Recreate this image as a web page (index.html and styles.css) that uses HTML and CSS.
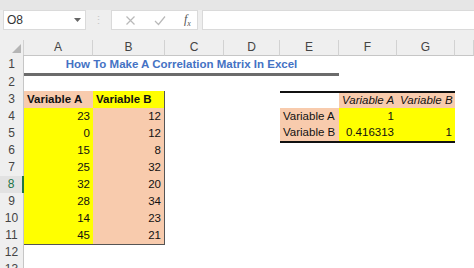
FILE: index.html
```html
<!DOCTYPE html>
<html>
	<head>
		<title>Correlation Matrix | Excel</title>
		<meta charset="UTF-8">
		<link rel="stylesheet" href="styles.css">
	</head>
	<body>
		<div class="ribbon"></div>

		<div class="formula-bar">
			<div class="name-box">
				<span>O8</span>
				<svg class="caret" width="7" height="4" viewBox="0 0 7 4"><polygon points="0,0 7,0 3.5,4" fill="#666"/></svg>
			</div>
			<div class="grip">&#8942;</div>
			<div class="fx-box">
				<svg width="11" height="11" viewBox="0 0 11 11"><path d="M1.5 1.5 L9.5 9.5 M9.5 1.5 L1.5 9.5" stroke="#b9b9b9" stroke-width="1.2" fill="none"/></svg>
				<svg width="12" height="11" viewBox="0 0 12 11"><path d="M1 6 L4.5 9.5 L11 1.5" stroke="#b9b9b9" stroke-width="1.2" fill="none"/></svg>
				<span class="fx">f<sub>x</sub></span>
			</div>
			<div class="formula-input"></div>
		</div>

		<div class="sheet">
			<div class="row head">
				<div class="corner"><svg width="9" height="9" viewBox="0 0 9 9"><polygon points="9,0 9,9 0,9" fill="#b5b5b5"/></svg></div>
				<div class="col">A</div>
				<div class="col">B</div>
				<div class="col">C</div>
				<div class="col">D</div>
				<div class="col">E</div>
				<div class="col">F</div>
				<div class="col">G</div>
				<div class="col"></div>
			</div>

			<div class="row first">
				<div class="num">1</div>
				<div class="title">How To Make A Correlation Matrix In Excel</div>
			</div>

			<div class="row">
				<div class="num">2</div>
			</div>

			<div class="row">
				<div class="num">3</div>
				<div class="cell peach bold">Variable A</div>
				<div class="cell yellow bold edge">Variable B</div>
				<div class="cell"></div>
				<div class="cell"></div>
				<div class="cell top-rule"></div>
				<div class="cell peach italic top-rule">Variable A</div>
				<div class="cell peach italic top-rule right">Variable B</div>
			</div>

			<div class="row">
				<div class="num">4</div>
				<div class="cell yellow right">23</div>
				<div class="cell peach right edge">12</div>
				<div class="cell"></div>
				<div class="cell"></div>
				<div class="cell peach">Variable A</div>
				<div class="cell yellow right">1</div>
				<div class="cell yellow"></div>
			</div>

			<div class="row">
				<div class="num">5</div>
				<div class="cell yellow right">0</div>
				<div class="cell peach right edge">12</div>
				<div class="cell"></div>
				<div class="cell"></div>
				<div class="cell peach bottom-rule">Variable B</div>
				<div class="cell yellow right bottom-rule">0.416313</div>
				<div class="cell yellow right bottom-rule">1</div>
			</div>

			<div class="row">
				<div class="num">6</div>
				<div class="cell yellow right">15</div>
				<div class="cell peach right edge">8</div>
			</div>

			<div class="row">
				<div class="num">7</div>
				<div class="cell yellow right">25</div>
				<div class="cell peach right edge">32</div>
			</div>

			<div class="row">
				<div class="num active">8</div>
				<div class="cell yellow right">32</div>
				<div class="cell peach right edge">20</div>
			</div>

			<div class="row">
				<div class="num">9</div>
				<div class="cell yellow right">28</div>
				<div class="cell peach right edge">34</div>
			</div>

			<div class="row">
				<div class="num">10</div>
				<div class="cell yellow right">14</div>
				<div class="cell peach right edge">23</div>
			</div>

			<div class="row">
				<div class="num">11</div>
				<div class="cell yellow right last">45</div>
				<div class="cell peach right edge last">21</div>
			</div>

			<div class="row">
				<div class="num">12</div>
			</div>

			<div class="row">
				<div class="num">13</div>
			</div>
		</div>
	</body>
</html>
```

FILE: styles.css
```css
body {
	margin: 0;
	background: #ffffff;
	font-family: "Liberation Sans", Arial, sans-serif;
	color: #111111;
	overflow: hidden;
}

.ribbon {
	height: 10px;
	background: #e6e6e6;
}

/* name box + formula input */
.formula-bar {
	display: flex;
	align-items: stretch;
	height: 20px;
	padding-bottom: 10px;
	background: #eeeeee;
}

.name-box {
	display: flex;
	align-items: center;
	justify-content: space-between;
	width: 74px;
	margin-left: 3px;
	padding: 0 4px 0 3px;
	background: #ffffff;
	border: 1px solid #dadada;
	font-size: 12px;
	color: #333333;
}

.grip {
	width: 25px;
	text-align: center;
	color: #c8c8c8;
	font-size: 11px;
	line-height: 20px;
}

.fx-box {
	display: flex;
	align-items: center;
	gap: 18px;
	width: 72px;
	padding-left: 13px;
	background: #ffffff;
	border: 1px solid #dadada;
}

.fx {
	font-family: "Liberation Serif", serif;
	font-style: italic;
	font-size: 12px;
	color: #555555;
}

.fx sub {
	font-size: 8px;
}

.formula-input {
	flex: 1;
	margin-left: 4px;
	background: #ffffff;
	border: 1px solid #dadada;
	border-right: none;
}

/* grid */
.row {
	display: grid;
	grid-template-columns: 24px 69px 72px 59px 56px 59px 58px 58px 1fr;
	height: 17px;
	font-size: 11.5px;
	line-height: 17px;
}

.row.head {
	height: 15px;
	line-height: 15px;
	background: #efefef;
}

.row.first {
	height: 19px;
	line-height: 19px;
}

.corner {
	display: flex;
	align-items: flex-end;
	justify-content: flex-end;
	padding: 0 2px 2px 0;
	border-right: 1px solid #d2d2d2;
	border-bottom: 1px solid #c6c6c6;
}

.col {
	text-align: center;
	color: #444444;
	font-size: 12px;
	border-right: 1px solid #d2d2d2;
	border-bottom: 1px solid #c6c6c6;
}

.num {
	background: #efefef;
	text-align: center;
	color: #444444;
	font-size: 12px;
	border-right: 1px solid #c6c6c6;
	border-bottom: 1px solid #dcdcdc;
}

.num.active {
	color: #217346;
	background: #e2e2e2;
	border-right: 2px solid #217346;
}

.title {
	grid-column: span 5;
	text-align: center;
	font-weight: bold;
	color: #4472c4;
	border-bottom: 3px solid #6b6b6b;
	line-height: 18px;
}

.cell {
	padding: 0 3px;
	white-space: nowrap;
	overflow: hidden;
}

.yellow {
	background: #ffff00;
}

.peach {
	background: #f8cbad;
}

.bold {
	font-weight: bold;
}

.italic {
	font-style: italic;
}

.right {
	text-align: right;
}

.edge {
	border-right: 1px solid #555555;
}

.last {
	border-bottom: 1px solid #555555;
}

.top-rule {
	border-top: 2px solid #111111;
	line-height: 15px;
}

.bottom-rule {
	border-bottom: 2px solid #111111;
	line-height: 15px;
}
```
